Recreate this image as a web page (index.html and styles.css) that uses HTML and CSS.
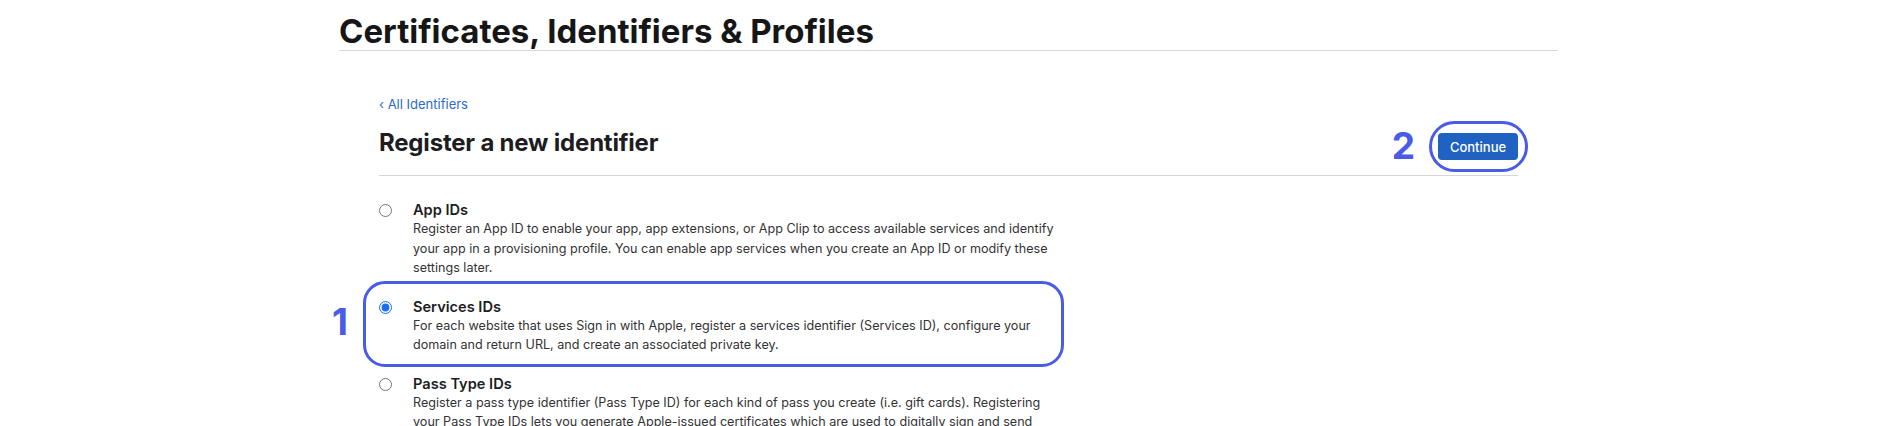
FILE: index.html
```html
<!DOCTYPE html>
<html lang="en">
<head>
<meta charset="utf-8">
<title>Certificates, Identifiers &amp; Profiles</title>
<link rel="stylesheet" href="styles.css">
</head>
<body>
<div class="page">
  <h1 class="page-title">Certificates, Identifiers &amp; Profiles</h1>
  <main class="content">
    <a class="back-link" href="#">&lsaquo; All Identifiers</a>
    <div class="heading-row">
      <h2 class="heading">Register a new identifier</h2>
      <span class="callout callout-two">
        <span class="step-num">2</span>
        <button class="btn-primary" type="button">Continue</button>
      </span>
    </div>
    <div class="options">
      <label class="option">
        <input class="radio" type="radio" name="idtype">
        <span class="option-body">
          <span class="option-title">App IDs</span>
          <span class="option-desc">Register an App ID to enable your app, app extensions, or App Clip to access available services and identify your app in a provisioning profile. You can enable app services when you create an App ID or modify these settings later.</span>
        </span>
      </label>
      <label class="option option-highlight">
        <span class="step-num step-one">1</span>
        <input class="radio" type="radio" name="idtype" checked>
        <span class="option-body">
          <span class="option-title">Services IDs</span>
          <span class="option-desc">For each website that uses Sign in with Apple, register a services identifier (Services ID), configure your domain and return URL, and create an associated private key.</span>
        </span>
      </label>
      <label class="option">
        <input class="radio" type="radio" name="idtype">
        <span class="option-body">
          <span class="option-title">Pass Type IDs</span>
          <span class="option-desc">Register a pass type identifier (Pass Type ID) for each kind of pass you create (i.e. gift cards). Registering your Pass Type IDs lets you generate Apple-issued certificates which are used to digitally sign and send updates to your passes, and allow your passes to be recognized by Wallet.</span>
        </span>
      </label>
    </div>
  </main>
</div>
</body>
</html>
```

FILE: styles.css
```css
* { box-sizing: border-box; }

html, body {
  margin: 0;
  padding: 0;
  background: #ffffff;
}

body {
  font-family: Inter, "Liberation Sans", sans-serif;
  color: #1d1d1f;
  overflow: hidden;
}

.page {
  width: 1219px;
  margin: 0 auto;
}

.page-title {
  margin: 0;
  padding-top: 12px;
  font-size: 33px;
  line-height: 38px;
  font-weight: 700;
  letter-spacing: 0;
  color: #161617;
  border-bottom: 1px solid #d6d6d6;
}

.content {
  padding: 43px 40px 0 40px;
}

.back-link {
  display: block;
  font-size: 13px;
  line-height: 20px;
  color: #2a6bd0;
  text-decoration: none;
}

.heading-row {
  display: flex;
  align-items: flex-start;
  justify-content: space-between;
  margin-top: 14px;
  padding-bottom: 15px;
  border-bottom: 1px solid #d6d6d6;
}

.heading {
  margin: 0;
  font-size: 24px;
  line-height: 30px;
  font-weight: 700;
  letter-spacing: -0.2px;
  color: #1d1d1f;
}

.callout {
  position: relative;
  display: inline-flex;
  margin-top: 5px;
}

.callout-two::before {
  content: "";
  position: absolute;
  left: -9px;
  right: -10px;
  top: -12px;
  bottom: -12px;
  border: 3px solid #4a5ce6;
  border-radius: 26px;
}

.step-num {
  position: absolute;
  font-size: 37px;
  line-height: 36px;
  font-weight: 700;
  color: #4a5ce6;
}

.callout-two .step-num {
  right: calc(100% + 23px);
  top: -5px;
}

.btn-primary {
  width: 80px;
  height: 27px;
  border: none;
  border-radius: 4px;
  background: #1f62c2;
  color: #ffffff;
  font-family: Inter, "Liberation Sans", sans-serif;
  font-size: 13px;
  font-weight: 500;
  padding: 0;
}

.options {
  display: flex;
  flex-direction: column;
  gap: 20px;
  padding-top: 25px;
}

.option {
  position: relative;
  display: flex;
  align-items: flex-start;
  width: 684px;
}

.option-highlight::before {
  content: "";
  position: absolute;
  left: -16px;
  right: -1px;
  top: -17px;
  bottom: -12px;
  border: 3px solid #4a5ce6;
  border-radius: 22px;
}

.step-one {
  right: calc(100% + 31px);
  top: 6px;
}

.radio {
  width: 13px;
  height: 13px;
  margin: 3px 21px 0 0;
  flex: none;
  accent-color: #1a6ff0;
}

.option-body {
  display: flex;
  flex-direction: column;
}

.option-title {
  font-size: 14.6px;
  line-height: 18px;
  font-weight: 600;
  color: #1d1d1f;
}

.option-desc {
  font-size: 12.6px;
  line-height: 19.5px;
  color: #333336;
}
```
